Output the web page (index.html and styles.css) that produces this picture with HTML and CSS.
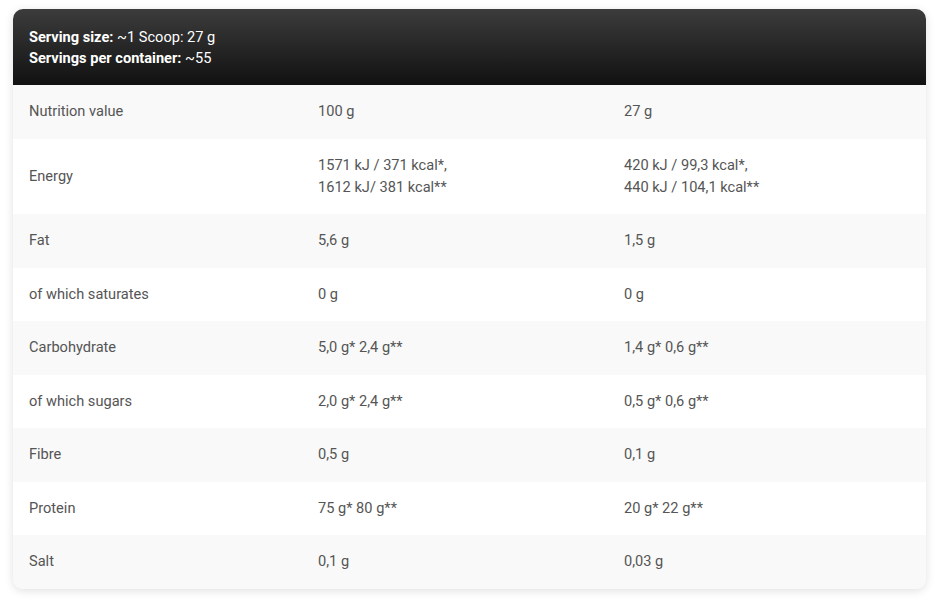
FILE: index.html
```html
<!DOCTYPE html>
<html>
<head>
<meta charset="utf-8">
<link rel="stylesheet" href="styles.css">
</head>
<body>
<div class="card">
  <div class="head">
    <div><b>Serving size:</b> ~1 Scoop: 27 g</div>
    <div><b>Servings per container:</b> ~55</div>
  </div>
  <div class="table">
    <div class="row alt"><div>Nutrition value</div><div>100 g</div><div>27 g</div></div>
    <div class="row"><div>Energy</div><div>1571 kJ / 371 kcal*,<br>1612 kJ/ 381 kcal**</div><div>420 kJ / 99,3 kcal*,<br>440 kJ / 104,1 kcal**</div></div>
    <div class="row alt"><div>Fat</div><div>5,6 g</div><div>1,5 g</div></div>
    <div class="row"><div>of which saturates</div><div>0 g</div><div>0 g</div></div>
    <div class="row alt"><div>Carbohydrate</div><div>5,0 g* 2,4 g**</div><div>1,4 g* 0,6 g**</div></div>
    <div class="row"><div>of which sugars</div><div>2,0 g* 2,4 g**</div><div>0,5 g* 0,6 g**</div></div>
    <div class="row alt"><div>Fibre</div><div>0,5 g</div><div>0,1 g</div></div>
    <div class="row"><div>Protein</div><div>75 g* 80 g**</div><div>20 g* 22 g**</div></div>
    <div class="row alt"><div>Salt</div><div>0,1 g</div><div>0,03 g</div></div>
  </div>
</div>
</body>
</html>
```
FILE: styles.css
```css
html, body {
  margin: 0;
  background: #fff;
}
body {
  padding: 9px 12px 14px 13px;
  font-family: Roboto, "Liberation Sans", sans-serif;
  font-size: 14.6px;
}
.card {
  border-radius: 10px;
  overflow: hidden;
  box-shadow: 0 2px 10px rgba(0, 0, 0, 0.12);
  background: #fff;
}
.head {
  background: linear-gradient(to bottom, #3c3c3c, #111111);
  color: #fff;
  padding: 18px 16px 16px 16px;
  line-height: 21px;
  height: 42px;
}
.head b {
  font-weight: 700;
}
.row {
  display: grid;
  grid-template-columns: 289px 306px 1fr;
  align-items: center;
  color: #555;
  line-height: 22px;
  background: #fff;
}
.row > div {
  padding: 15px 16px 16.5px;
}
.row.alt {
  background: #f9f9f9;
}
```
